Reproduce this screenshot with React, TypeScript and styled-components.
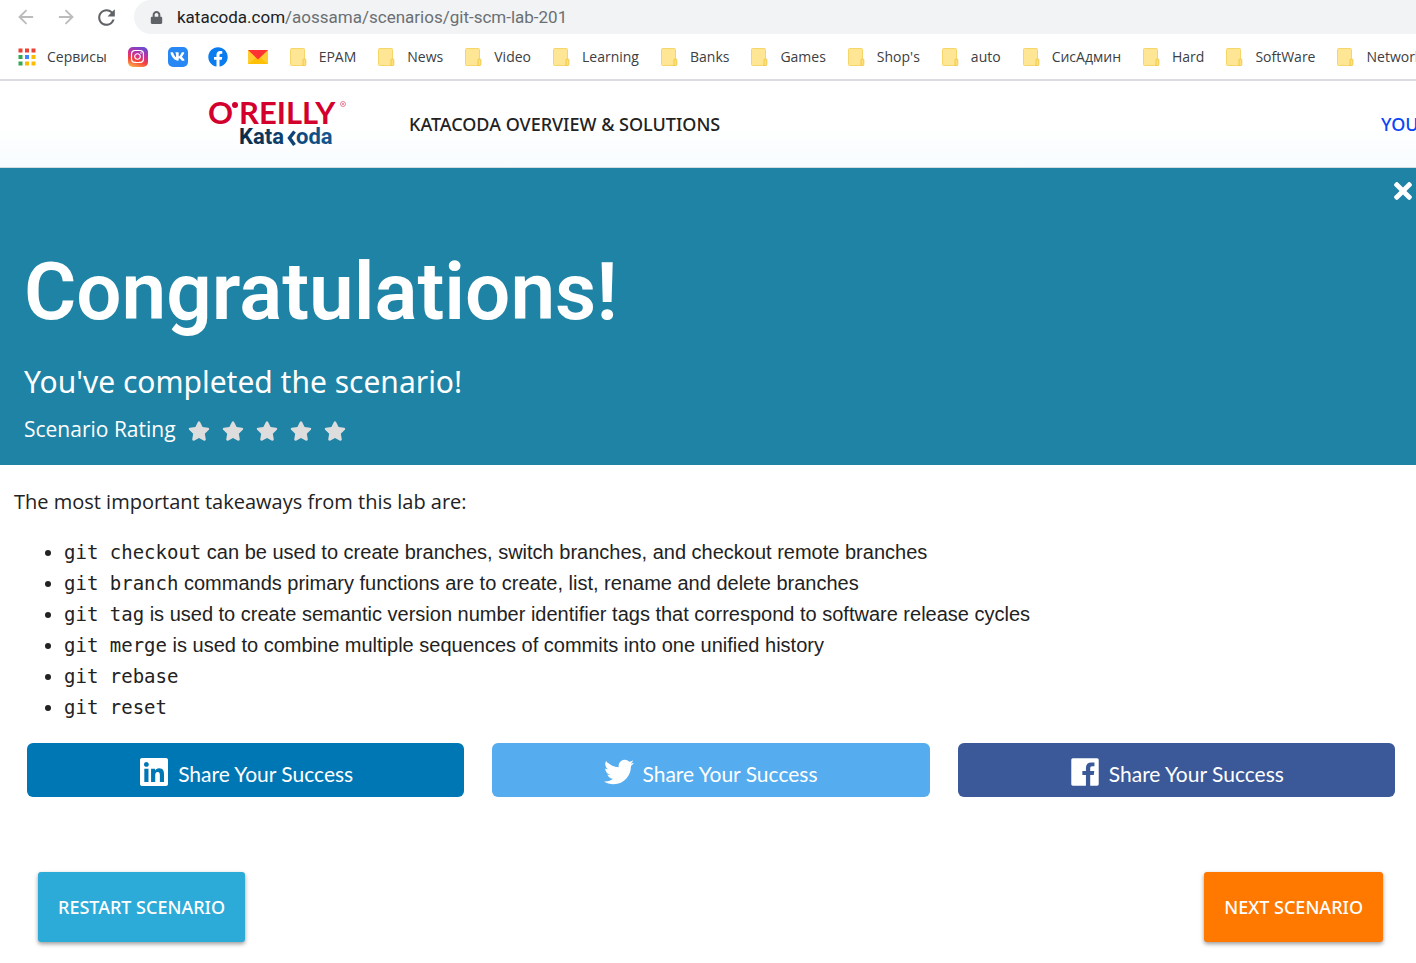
import React from 'react';
import styled, { createGlobalStyle } from 'styled-components';
import { ArrowLeft, ArrowRight } from 'lucide-react';
import { FaInstagram, FaVk, FaStar, FaTimes, FaLinkedin, FaTwitter, FaFacebook, FaLock } from 'react-icons/fa';
import { MdRefresh } from 'react-icons/md';

const GlobalStyle = createGlobalStyle`
  *, *::before, *::after { box-sizing: border-box; }
  body {
    margin: 0;
    background: #fff;
    color: #222;
    font-family: 'Open Sans', 'Noto Sans', sans-serif;
    overflow-x: hidden;
  }
  button { font: inherit; border: 0; padding: 0; background: none; cursor: pointer; }
  a { color: inherit; text-decoration: none; }
  svg { display: block; flex: none; }
`;

/* Browser chrome */
const AddressRow = styled.div`
  display: flex;
  align-items: center;
  height: 34px;
  padding-left: 16px;
`;

const NavButton = styled.button<{ $dim?: boolean }>`
  display: flex;
  justify-content: center;
  width: 20px;
  margin-right: 20px;
  flex: none;
  color: ${(p) => (p.$dim ? '#babcbe' : '#5f6368')};
`;

const AddressBar = styled.div`
  display: flex;
  align-items: center;
  gap: 14px;
  flex: 1;
  height: 34px;
  margin-left: -2px;
  padding-left: 16px;
  border-radius: 17px 0 0 17px;
  background: #f1f3f4;
  color: #5f6368;
`;

const Url = styled.div`
  font: 17px/24px Roboto, sans-serif;
  color: #6b6f73;
  white-space: nowrap;
`;

const Host = styled.span`
  color: #202124;
`;

const BookmarkBar = styled.nav`
  display: flex;
  align-items: center;
  gap: 21px;
  height: 47px;
  padding-left: 17px;
  border-bottom: 2px solid #dadce0;
  overflow: hidden;
`;

const Bookmark = styled.a`
  display: flex;
  align-items: center;
  gap: 10px;
  flex: none;
  font-size: 14px;
  line-height: 20px;
  color: #3c4043;
  white-space: nowrap;
`;

const PinnedSites = styled.div`
  display: flex;
  gap: 20px;
  flex: none;
`;

const SiteBadge = styled.a<{ $bg: string }>`
  display: flex;
  align-items: center;
  justify-content: center;
  width: 20px;
  height: 20px;
  border-radius: 5px;
  background: ${(p) => p.$bg};
  color: #fff;
`;

/* Site header */
const Header = styled.header`
  display: flex;
  align-items: center;
  height: 87px;
  padding-left: 208px;
  border-bottom: 1px solid #d5dcdf;
  background: linear-gradient(#fff 50%, #f8fcfe);
`;

const HeaderLink = styled.a`
  margin-left: 61px;
  font: 500 18px/24px 'Noto Sans', sans-serif;
  color: #222;
  white-space: nowrap;
`;

const AccountLink = styled.a`
  width: 35px;
  margin-left: auto;
  font: 500 18px/24px 'Noto Sans', sans-serif;
  color: #0a46f5;
  white-space: nowrap;
`;

/* Banner */
const Banner = styled.section`
  padding: 10px 4px 21px 24px;
  background: #1e83a5;
  color: #fff;
`;

const CloseButton = styled.button`
  display: block;
  margin: 0 -4px 0 auto;
  color: #fff;
`;

const Title = styled.h1`
  margin: 40px 0 22px;
  font: 600 80px/96px Roboto, sans-serif;
`;

const Subtitle = styled.h2`
  margin: 0 0 12px;
  font: 400 30px/40px 'Noto Sans', sans-serif;
`;

const Rating = styled.div`
  display: flex;
  align-items: center;
  gap: 12px;
  font-size: 21px;
  line-height: 30px;
`;

const Stars = styled.div`
  display: flex;
  gap: 12px;
  padding-top: 4px;
  color: #ddd;
`;

const StarButton = styled.button`
  color: inherit;
`;

/* Takeaways */
const Main = styled.main`
  padding: 22px 21px 24px 14px;
`;

const Intro = styled.p`
  margin: 0 0 20px;
  font-size: 20px;
  line-height: 30px;
`;

const Takeaways = styled.ul`
  margin: 0;
  padding-left: 50px;
  font: 20px/31px 'Liberation Sans', Arial, sans-serif;
`;

const Code = styled.code`
  font: 19px/20px 'DejaVu Sans Mono', monospace;
`;

const ShareRow = styled.div`
  display: grid;
  grid-template-columns: repeat(3, 1fr);
  gap: 28px;
  margin: 20px 0 75px 13px;
`;

const ShareButton = styled.button<{ $bg: string }>`
  display: flex;
  align-items: center;
  justify-content: center;
  gap: 8px;
  height: 54px;
  padding-top: 4px;
  border-radius: 6px;
  background: ${(p) => p.$bg};
  color: #fff;
`;

const ShareLabel = styled.span`
  padding-top: 4px;
  font: 21px/28px Lato, sans-serif;
`;

const ActionRow = styled.div`
  display: flex;
  justify-content: space-between;
  padding: 0 12px 0 24px;
`;

const ActionButton = styled.button<{ $bg: string }>`
  height: 70px;
  padding: 0 20px;
  border-radius: 3px;
  background: ${(p) => p.$bg};
  box-shadow: 0 2px 4px rgba(0, 0, 0, 0.4);
  font: 500 18px/24px 'Noto Sans', sans-serif;
  color: #fff;
`;

const LogoDrawing = styled.svg`
  overflow: visible;
`;

const AppsIcon = () => {
  const colors = ['#ea4335', '#ea4335', '#ea4335', '#34a853', '#4285f4', '#fbbc04', '#34a853', '#fbbc04', '#fbbc04'];
  return (
    <svg width="20" height="20" viewBox="0 0 20 20">
      {colors.map((c, i) => (
        <rect key={i} x={1.5 + (i % 3) * 6.5} y={1.5 + Math.floor(i / 3) * 6.5} width="4" height="4" fill={c} />
      ))}
    </svg>
  );
};

const FolderIcon = () => (
  <svg width="20" height="20" viewBox="0 0 20 20">
    <rect x="1.5" y="1.5" width="14" height="17" rx="1" fill="#ffe694" stroke="#f6d668" />
    <path d="M14 18.500v-5.500a1 1 0 0 1 1-1h1a.8.8 0 0 1 .8.800v4.700a1 1 0 0 1-1 1z" fill="#ffe07a" stroke="#f0c94a" />
  </svg>
);

const MailIcon = () => (
  <svg width="20" height="20" viewBox="0 0 20 20">
    <path d="M0 3h20v14H0z" fill="#ffcc33" />
    <path d="M0 17 10 9l10 8z" fill="#ffc107" />
    <path d="M0 3h20L10 12.500z" fill="#ff3333" />
  </svg>
);

const FacebookOfficialIcon = () => (
  <svg width="32" height="32" viewBox="0 0 1792 1792" fill="currentColor">
    <path d="M1579 128q35 0 60 25t25 60v1366q0 35-25 60t-60 25h-391v-595h199l30-232h-229v-148q0-56 23.500-84t91.500-28l122-1v-207q-63-9-178-9-136 0-217.500 80t-81.500 226v171h-200v232h200v595H213q-35 0-60-25t-25-60V213q0-35 25-60t60-25z" />
  </svg>
);

const Logo = () => (
  <LogoDrawing width="140" height="52" viewBox="0 0 140 52" role="img" aria-label="O'Reilly Katacoda">
    <defs>
      <linearGradient id="kata" gradientUnits="userSpaceOnUse" x1="32" y1="0" x2="125" y2="0">
        <stop offset="0" stopColor="#0b2a45" />
        <stop offset="0.55" stopColor="#0e4478" />
        <stop offset="1" stopColor="#14568f" />
      </linearGradient>
    </defs>
    <g fill="#d3002d" fontFamily="Lato, sans-serif" fontSize="31" fontWeight="700">
      <text x="0" y="26">O</text>
      <circle cx="27" cy="7" r="3" />
      <text x="31" y="26">REILLY</text>
      <circle cx="135" cy="6" r="2.500" fill="none" stroke="#d3002d" strokeWidth="0.700" opacity="0.700" />
      <circle cx="135" cy="6" r="0.900" opacity="0.600" />
    </g>
    <g fill="url(#kata)" fontFamily="Roboto, sans-serif" fontSize="22" fontWeight="700">
      <text x="31" y="46">K</text>
      <text x="45" y="46">ata</text>
      <path d="M86.500 33.500l-5 6.500 5 7" fill="none" stroke="#0e4478" strokeWidth="3.500" />
      <text x="88" y="46">oda</text>
    </g>
  </LogoDrawing>
);

const folders = ['EPAM', 'News', 'Video', 'Learning', 'Banks', 'Games', "Shop's", 'auto', 'СисАдмин', 'Hard', 'SoftWare', 'Network'];

const takeaways: [string, string][] = [
  ['git checkout', ' can be used to create branches, switch branches, and checkout remote branches'],
  ['git branch', ' commands primary functions are to create, list, rename and delete branches'],
  ['git tag', ' is used to create semantic version number identifier tags that correspond to software release cycles'],
  ['git merge', ' is used to combine multiple sequences of commits into one unified history'],
  ['git rebase', ''],
  ['git reset', ''],
];

export default function App() {
  return (
    <>
      <GlobalStyle />
      <AddressRow>
        <NavButton $dim aria-label="Back"><ArrowLeft size={22} strokeWidth={2} /></NavButton>
        <NavButton $dim aria-label="Forward"><ArrowRight size={22} strokeWidth={2} /></NavButton>
        <NavButton aria-label="Reload"><MdRefresh size={25} /></NavButton>
        <AddressBar>
          <FaLock size={13} />
          <Url><Host>katacoda.com</Host>/aossama/scenarios/git-scm-lab-201</Url>
        </AddressBar>
      </AddressRow>
      <BookmarkBar>
        <Bookmark href="#"><AppsIcon />Сервисы</Bookmark>
        <PinnedSites>
          <SiteBadge href="#" aria-label="Instagram" $bg="linear-gradient(200deg, #5b4fd6 5%, #c62fa0 40%, #f5413c 65%, #fdc24e)">
            <FaInstagram size={15} />
          </SiteBadge>
          <SiteBadge href="#" aria-label="VK" $bg="#2787f5"><FaVk size={15} /></SiteBadge>
          <SiteBadge href="#" aria-label="Facebook" $bg="#fff"><FaFacebook size={20} color="#0a7cf0" /></SiteBadge>
          <SiteBadge href="#" aria-label="Mail" $bg="#fff"><MailIcon /></SiteBadge>
        </PinnedSites>
        {folders.map((name) => (
          <Bookmark href="#" key={name}><FolderIcon />{name}</Bookmark>
        ))}
      </BookmarkBar>

      <Header>
        <a href="#"><Logo /></a>
        <HeaderLink href="#">KATACODA OVERVIEW &amp; SOLUTIONS</HeaderLink>
        <AccountLink href="#">YOU</AccountLink>
      </Header>

      <Banner>
        <CloseButton aria-label="Close"><FaTimes size={26} /></CloseButton>
        <Title>Congratulations!</Title>
        <Subtitle>You've completed the scenario!</Subtitle>
        <Rating>
          Scenario Rating
          <Stars>
            {[1, 2, 3, 4, 5].map((n) => (
              <StarButton key={n} aria-label={`Rate ${n}`}><FaStar size={22} /></StarButton>
            ))}
          </Stars>
        </Rating>
      </Banner>

      <Main>
        <Intro>The most important takeaways from this lab are:</Intro>
        <Takeaways>
          {takeaways.map(([command, text]) => (
            <li key={command}><Code>{command}</Code>{text}</li>
          ))}
        </Takeaways>
        <ShareRow>
          <ShareButton $bg="#0077b5"><FaLinkedin size={32} /><ShareLabel>Share Your Success</ShareLabel></ShareButton>
          <ShareButton $bg="#55acee"><FaTwitter size={30} /><ShareLabel>Share Your Success</ShareLabel></ShareButton>
          <ShareButton $bg="#3b5998"><FacebookOfficialIcon /><ShareLabel>Share Your Success</ShareLabel></ShareButton>
        </ShareRow>
        <ActionRow>
          <ActionButton $bg="#2dabd8">RESTART SCENARIO</ActionButton>
          <ActionButton $bg="#ff7800">NEXT SCENARIO</ActionButton>
        </ActionRow>
      </Main>
    </>
  );
}
